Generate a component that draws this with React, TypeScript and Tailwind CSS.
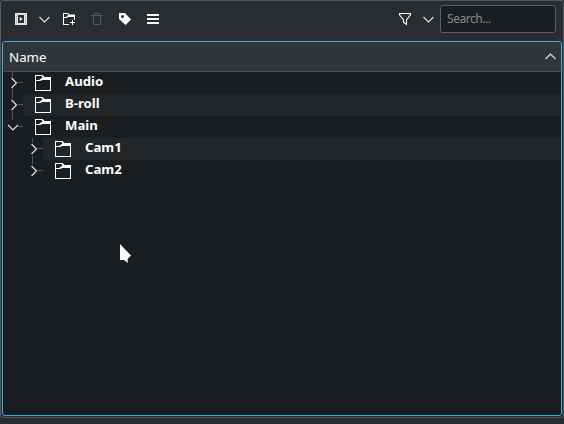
import React from "react";

type RowProps = { name: string; nested?: boolean; open?: boolean; shaded?: boolean; line: "full" | "top" | "half" };

function Chevron({ dir }: { dir: "down" | "up" }) {
  const d = {
    down: "M1.5 4l5 5 5-5",
    up: "M1.5 9l5-5 5 5",
  }[dir];
  return (
    <svg width="13" height="13" viewBox="0 0 13 13" fill="none" stroke="#e0e1e2" strokeWidth="1.15" className="block shrink-0">
      <path d={d} />
    </svg>
  );
}

function Folder() {
  return (
    <svg width="16" height="16" viewBox="0 0 16 16" className="block shrink-0" fill="#fcfcfc">
      <path fillRule="evenodd" d="M0 0h7.5l2 2H16v14H0zM1 1v4h3l3.5-2.5L6.5 1zM1 6v9h14V5H7.5L5 6z" />
    </svg>
  );
}

function Row({ name, nested, open, shaded, line }: RowProps) {
  return (
    <div className={nested ? "flex h-[22px] pl-5" : "flex h-[22px]"}>
      <svg width="20" height="22" viewBox="0 0 20 22" className="block shrink-0" fill="none">
        <path
          stroke="#505457"
          d={line === "full" ? "M9.5 0v5M9.5 17v5M15 10.5h5" : line === "half" ? "M9.5 0v5M15 10.5h5" : "M9.5 0v4M15 10.5h5"}
        />
        <path stroke="#e0e1e2" strokeWidth="1.15" d={open ? "M5 9l5 5 5-5" : "M8.5 6l5 5-5 5"} />
      </svg>
      <div className={shaded ? "flex flex-1 items-center bg-[#232629] pl-3" : "flex flex-1 items-center pl-3"}>
        <Folder />
        <span className="-mt-1 ml-[14px] text-[13.2px] leading-[18px] font-bold">{name}</span>
      </div>
    </div>
  );
}

export default function App() {
  return (
    <div className="h-[424px] w-[564px] overflow-hidden bg-[#2a2e32] font-['Noto_Sans',sans-serif] text-[#fcfcfc]">
      <div className="relative flex h-[418px] w-[564px] flex-col rounded-[3px] border border-[#55595c] bg-[#292c30] pl-px">
        <div className="flex h-10 shrink-0 items-center pr-[7px] pl-[11px]">
          <svg width="16" height="16" viewBox="0 0 16 16" className="-mt-1 block shrink-0">
            <path fill="#e4e5e6" fillRule="evenodd" d="M2 2h12v12H2zM5 4v8h6V4z" />
            <path fill="#a5a7a9" d="M3 3h1v1H3zM3 5h1v1H3zM3 7h1v1H3zM3 9h1v1H3zM3 11h1v1H3zM12 3h1v1h-1zM12 5h1v1h-1zM12 7h1v1h-1zM12 9h1v1h-1zM12 11h1v1h-1z" />
            <path fill="#fcfcfc" d="M6.7 6v4L9.7 8z" />
          </svg>
          <div className="-mt-[3px] ml-[9px]"><Chevron dir="down" /></div>
          <svg width="16" height="16" viewBox="0 0 16 16" className="-mt-1 ml-[10px] block shrink-0">
            <path fill="#fcfcfc" fillRule="evenodd" d="M2 2h5l1.5 1.5H14V9h-1V6H7L5.5 7H3v6h5v1H2zM3 3v3h2l2.2-2L6.5 3z" />
            <path fill="#fcfcfc" d="M11 9h1v2h2v1h-2v2h-1v-2H9v-1h2z" />
          </svg>
          <svg width="16" height="16" viewBox="0 0 16 16" fill="none" stroke="#54575a" className="-mt-1 ml-3 block shrink-0">
            <path d="M2 4.5h12M5.5 4V2.5h5V4M4.5 5v8.5h7V5" />
          </svg>
          <svg width="16" height="16" viewBox="0 0 16 16" className="-mt-1 ml-3 block shrink-0">
            <path fill="#fcfcfc" fillRule="evenodd" d="M2 2h6l6 6.5L8.5 14 2 8zM5.5 4a1.5 1.5 0 1 0 0 3 1.5 1.5 0 0 0 0-3z" />
          </svg>
          <svg width="16" height="16" viewBox="0 0 16 16" fill="#fcfcfc" className="-mt-1 ml-3 block shrink-0">
            <path d="M2 3h12v2H2zM2 7h12v2H2zM2 11h12v2H2z" />
          </svg>
          <svg width="16" height="16" viewBox="0 0 16 16" fill="none" stroke="#fcfcfc" strokeWidth="1.1" className="-mt-1 ml-auto block shrink-0">
            <path d="M2.5 2.5h11v1.3l-4 5.2v4.5l-3-2.3V9l-4-5.2z" />
          </svg>
          <div className="-mt-[3px] ml-[9px]"><Chevron dir="down" /></div>
          <div className="-mt-1 ml-[5px] flex h-7 w-[116px] shrink-0 items-center rounded-[3px] border border-[#5d6164] bg-[#1b1e20] px-1.5 text-[12px] leading-[18px] tracking-[-0.45px] text-[#888b8d]">
            Search...
          </div>
        </div>
        <div className="flex h-[375px] w-[560px] shrink-0 flex-col overflow-hidden rounded-[3px] border border-[#3daee9] bg-[#1b1e20]">
          <div className="flex h-[30px] shrink-0 items-center justify-between border-b border-[#4a4e51] bg-[#31363b] pr-1 pl-1.5">
            <span className="text-[13.33px] leading-[18px]">Name</span>
            <Chevron dir="up" />
          </div>
          <Row name="Audio" line="full" />
          <Row name="B-roll" line="full" shaded />
          <Row name="Main" line="top" open />
          <Row name="Cam1" line="full" nested shaded />
          <Row name="Cam2" line="half" nested />
        </div>
        <svg width="12" height="20" viewBox="0 0 12 20" fill="#fcfcfc" className="absolute top-[243px] left-[119px]">
          <path d="M0 0l11 11.5-3.5 3.5.5 4-4-3H0z" />
        </svg>
      </div>
    </div>
  );
}
